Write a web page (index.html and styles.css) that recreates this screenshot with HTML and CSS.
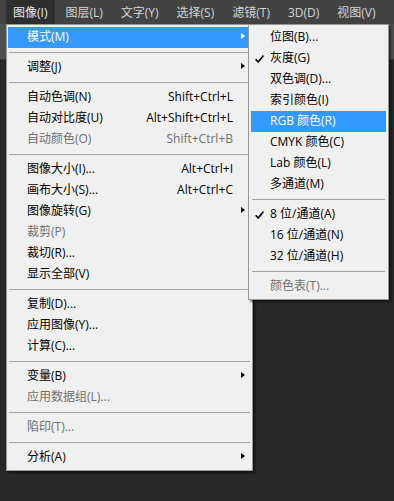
FILE: index.html
```html
<!DOCTYPE html>
<html>
<head>
 <meta http-equiv="content-type" content="text/html; charset=utf-8" />
 <title>图像菜单</title>
 <link rel="stylesheet" href="styles.css">
</head>
<body>
 <div class="app">
  <div class="menubar">
   <span class="top active">图像(I)</span>
   <span class="top">图层(L)</span>
   <span class="top">文字(Y)</span>
   <span class="top">选择(S)</span>
   <span class="top">滤镜(T)</span>
   <span class="top">3D(D)</span>
   <span class="top">视图(V)</span>
   <span class="top">窗口(W)</span>
  </div>
  <div class="optionsbar"></div>
  <div class="workspace"></div>

  <!-- image menu -->
  <div class="menu main-menu">
   <div class="item hl"><span class="label">模式(M)</span><span class="arrow"></span></div>
   <div class="sep"></div>
   <div class="item"><span class="label">调整(J)</span><span class="arrow"></span></div>
   <div class="sep"></div>
   <div class="item"><span class="label">自动色调(N)</span><span class="key">Shift+Ctrl+L</span></div>
   <div class="item"><span class="label">自动对比度(U)</span><span class="key">Alt+Shift+Ctrl+L</span></div>
   <div class="item off"><span class="label">自动颜色(O)</span><span class="key">Shift+Ctrl+B</span></div>
   <div class="sep"></div>
   <div class="item"><span class="label">图像大小(I)...</span><span class="key">Alt+Ctrl+I</span></div>
   <div class="item"><span class="label">画布大小(S)...</span><span class="key">Alt+Ctrl+C</span></div>
   <div class="item"><span class="label">图像旋转(G)</span><span class="arrow"></span></div>
   <div class="item off"><span class="label">裁剪(P)</span></div>
   <div class="item"><span class="label">裁切(R)...</span></div>
   <div class="item"><span class="label">显示全部(V)</span></div>
   <div class="sep"></div>
   <div class="item"><span class="label">复制(D)...</span></div>
   <div class="item"><span class="label">应用图像(Y)...</span></div>
   <div class="item"><span class="label">计算(C)...</span></div>
   <div class="sep"></div>
   <div class="item"><span class="label">变量(B)</span><span class="arrow"></span></div>
   <div class="item off"><span class="label">应用数据组(L)...</span></div>
   <div class="sep"></div>
   <div class="item off"><span class="label">陷印(T)...</span></div>
   <div class="sep"></div>
   <div class="item"><span class="label">分析(A)</span><span class="arrow"></span></div>
  </div>

  <!-- mode submenu -->
  <div class="menu sub-menu">
   <div class="item"><span class="label">位图(B)...</span></div>
   <div class="item"><svg class="check" width="9" height="8" viewBox="0 0 9 8"><path d="M0.7 4.2 L3.2 7 L8.4 0.6" fill="none" stroke="#000" stroke-width="1.7"/></svg><span class="label">灰度(G)</span></div>
   <div class="item"><span class="label">双色调(D)...</span></div>
   <div class="item"><span class="label">索引颜色(I)</span></div>
   <div class="item hl"><span class="label">RGB 颜色(R)</span></div>
   <div class="item"><span class="label">CMYK 颜色(C)</span></div>
   <div class="item"><span class="label">Lab 颜色(L)</span></div>
   <div class="item"><span class="label">多通道(M)</span></div>
   <div class="sep"></div>
   <div class="item"><svg class="check" width="9" height="8" viewBox="0 0 9 8"><path d="M0.7 4.2 L3.2 7 L8.4 0.6" fill="none" stroke="#000" stroke-width="1.7"/></svg><span class="label">8 位/通道(A)</span></div>
   <div class="item"><span class="label">16 位/通道(N)</span></div>
   <div class="item"><span class="label">32 位/通道(H)</span></div>
   <div class="sep"></div>
   <div class="item off"><span class="label">颜色表(T)...</span></div>
  </div>
 </div>
</body>
</html>
```

FILE: styles.css
```css
* {
 margin: 0;
 padding: 0;
 box-sizing: border-box;
}
body {
 width: 394px;
 height: 501px;
 overflow: hidden;
 background: #282828;
 font-family: "Open Sans", "Noto Sans CJK SC", sans-serif;
 font-size: 12px;
}
.app {
 position: relative;
 width: 394px;
 height: 501px;
}
.menubar {
 height: 24px;
 background: #434343;
 display: flex;
 gap: 3px;
 padding-left: 6px;
 overflow: hidden;
 white-space: nowrap;
}
.top {
 display: flex;
 align-items: center;
 padding: 0 8px 0 7px;
 color: #d4d4d4;
}
.top.active {
 background: #2e2e2e;
 color: #e8e8e8;
}
.optionsbar {
 height: 36px;
 background: #4f4f4f;
 border-bottom: 1px solid #3a3a3a;
}
.workspace {
 height: 441px;
 background: #282828;
}

.menu {
 position: absolute;
 top: 24px;
 background: #f0f0f0;
 border: 1px solid #979797;
 box-shadow: 2px 2px 2px rgba(0, 0, 0, 0.5);
 padding: 2px 1px;
}
.main-menu {
 left: 6px;
 width: 247px;
}
.sub-menu {
 left: 248px;
 width: 141px;
 padding: 2px 2px;
}
.item {
 position: relative;
 height: 21px;
 display: flex;
 align-items: center;
 padding: 0 6px 3px 19px;
 color: #000;
 white-space: nowrap;
}
.item .label {
 flex: 1;
}
.item .key {
 margin-right: 12px;
}
.item.off {
 color: #6f6f6f;
}
.item.hl {
 background: #3399ff;
 color: #fff;
}
.arrow {
 width: 0;
 height: 0;
 border-left: 4px solid #000;
 border-top: 3.5px solid transparent;
 border-bottom: 3.5px solid transparent;
}
.item.hl .arrow {
 border-left-color: #fff;
}
.check {
 position: absolute;
 left: 4px;
 top: 7px;
}
.sep {
 height: 9px;
 padding-top: 4px;
}
.sep::before {
 content: "";
 display: block;
 margin: 0 1px;
 border-top: 1px solid #a3a3a3;
}
```
